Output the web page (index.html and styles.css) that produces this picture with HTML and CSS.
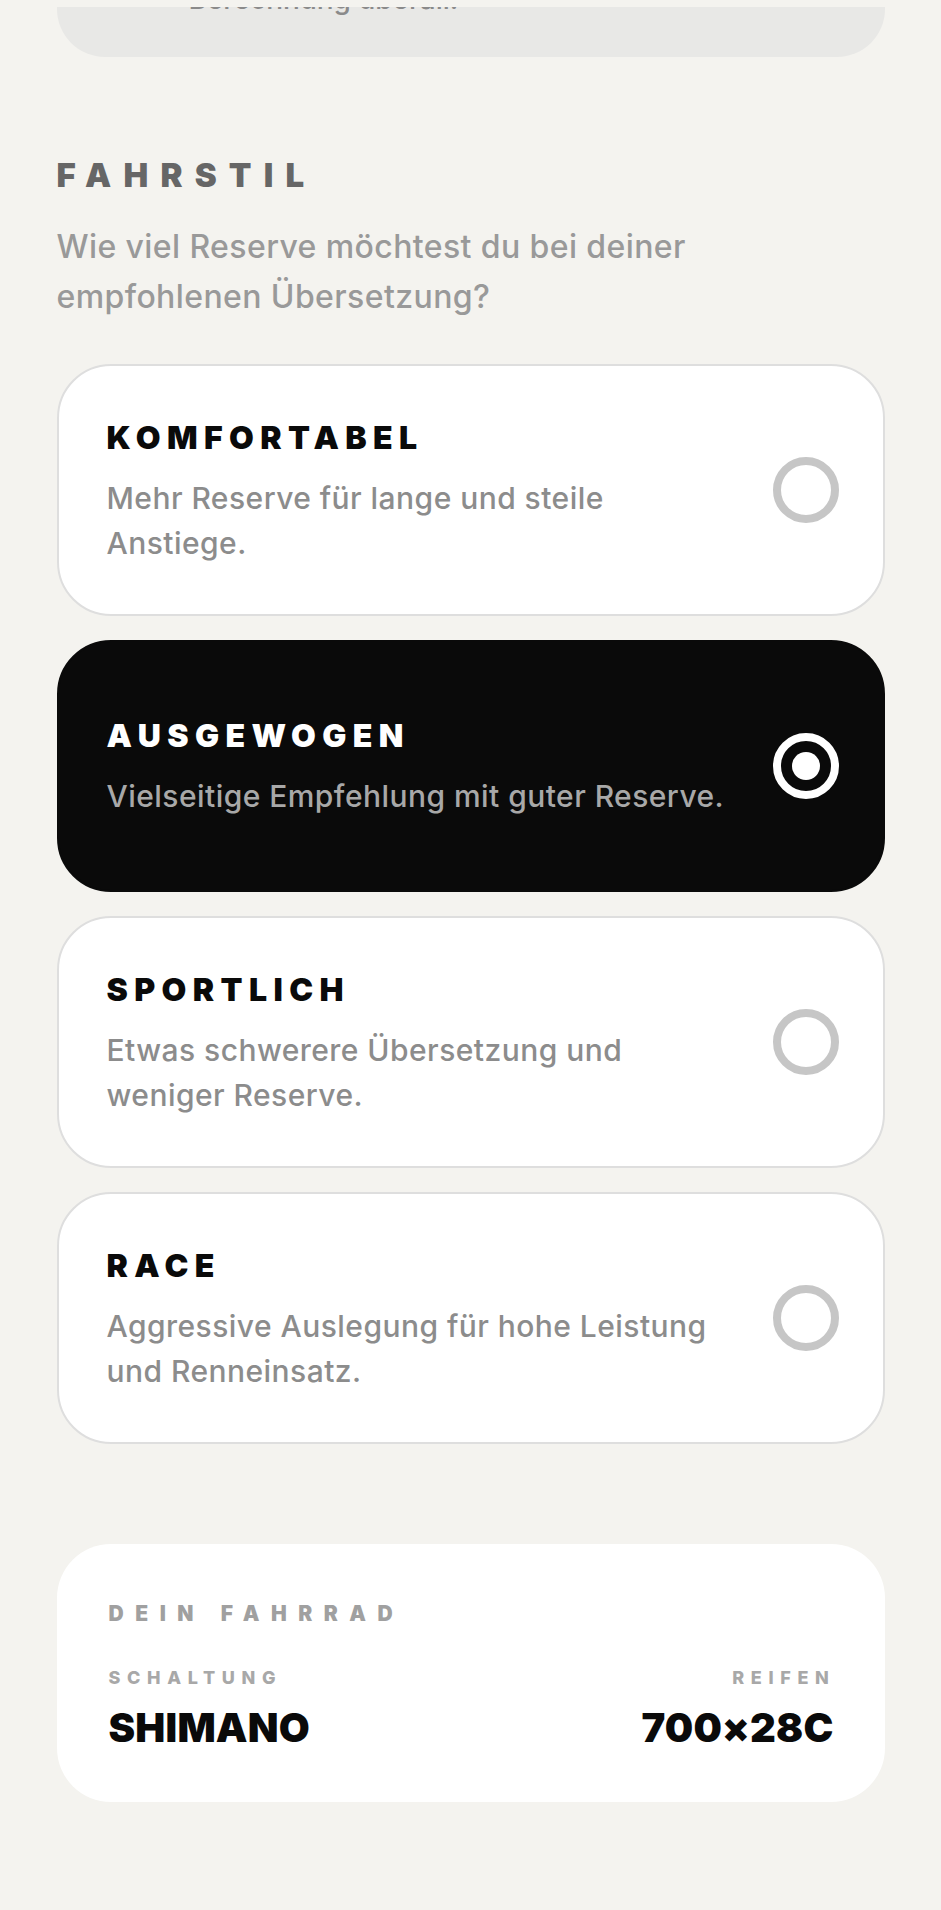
FILE: index.html
```html
<!DOCTYPE html>
<html lang="de">

<head>
    <meta charset="UTF-8">
    <meta name="viewport" content="width=device-width, initial-scale=1.0">
    <title>Fahrstil</title>
    <link rel="stylesheet" href="styles.css">
</head>

<body>
    <div class="page">
        <div class="prev_card">
            <p>Berechnung überall.</p>
        </div><!-- .prev_card end -->

        <section class="style">
            <h2>Fahrstil</h2>
            <p class="lead">Wie viel Reserve möchtest du bei deiner<br>empfohlenen Übersetzung?</p>

            <ul class="options">
                <li class="option">
                    <div class="txt">
                        <h3>Komfortabel</h3>
                        <p>Mehr Reserve für lange und steile<br>Anstiege.</p>
                    </div>
                    <span class="radio"></span>
                </li>
                <li class="option on">
                    <div class="txt">
                        <h3>Ausgewogen</h3>
                        <p>Vielseitige Empfehlung mit guter Reserve.</p>
                    </div>
                    <span class="radio"></span>
                </li>
                <li class="option">
                    <div class="txt">
                        <h3>Sportlich</h3>
                        <p>Etwas schwerere Übersetzung und<br>weniger Reserve.</p>
                    </div>
                    <span class="radio"></span>
                </li>
                <li class="option">
                    <div class="txt">
                        <h3>Race</h3>
                        <p>Aggressive Auslegung für hohe Leistung<br>und Renneinsatz.</p>
                    </div>
                    <span class="radio"></span>
                </li>
            </ul>
        </section><!-- .style end -->

        <section class="bike">
            <h4>Dein Fahrrad</h4>
            <div class="bike_row">
                <div class="item">
                    <span class="label">Schaltung</span>
                    <strong>SHIMANO</strong>
                </div>
                <div class="item right">
                    <span class="label">Reifen</span>
                    <strong>700×28C</strong>
                </div>
            </div>
        </section><!-- .bike end -->
    </div>
</body>

</html>
```

FILE: styles.css
```css
@charset "utf-8";

* {
    margin: 0;
    padding: 0;
    box-sizing: border-box;
}

li {
    list-style: none;
}

body {
    background-color: #f4f3ef;
    font-family: Inter, "Noto Sans", sans-serif;
    color: #0a0a0a;
}

.page {
    width: 828px;
    margin: 0 auto;
    padding: 7px 0 100px;
}

/* previous card, scrolled almost out of view */
.prev_card {
    height: 50px;
    overflow: hidden;
    background-color: #e8e8e6;
    border-radius: 0 0 48px 48px;
}

.prev_card p {
    margin-top: -23px;
    padding-left: 132px;
    font-size: 28px;
    line-height: 30px;
    font-weight: 500;
    color: #8a8a8a;
}

.style {
    margin-top: 98px;
}

.style h2 {
    font-size: 33px;
    line-height: 40px;
    font-weight: 900;
    letter-spacing: 0.37em;
    text-transform: uppercase;
    color: #666;
}

.style .lead {
    margin-top: 27px;
    font-size: 32px;
    line-height: 50px;
    font-weight: 500;
    letter-spacing: 0.4px;
    color: #999;
}

.options {
    margin-top: 42px;
    display: flex;
    flex-direction: column;
    gap: 24px;
}

.option {
    height: 252px;
    padding: 4px 44px 0 48px;
    display: flex;
    align-items: center;
    justify-content: space-between;
    gap: 24px;
    background-color: #fff;
    border: 2px solid #dedede;
    border-radius: 54px;
}

.option h3 {
    font-size: 32px;
    line-height: 38px;
    font-weight: 900;
    letter-spacing: 0.2em;
    text-transform: uppercase;
}

.option p {
    margin-top: 19px;
    font-size: 30px;
    line-height: 45px;
    font-weight: 500;
    letter-spacing: 0.45px;
    color: #8c8c8c;
}

.option .radio {
    flex: none;
    width: 66px;
    height: 66px;
    margin-top: -4px;
    border: 8px solid #c6c6c6;
    border-radius: 50%;
    display: flex;
    align-items: center;
    justify-content: center;
}

.option.on {
    background-color: #0a0a0a;
    border-color: #0a0a0a;
    color: #fff;
}

.option.on p {
    color: #a8a8a8;
}

.option.on .radio {
    border-color: #fff;
}

.option.on .radio::after {
    content: "";
    width: 28px;
    height: 28px;
    border-radius: 50%;
    background-color: #fff;
}

.bike {
    margin-top: 100px;
    padding: 57px 51px 51px 52px;
    background-color: #fff;
    border-radius: 54px;
}

.bike h4 {
    font-size: 21px;
    line-height: 25px;
    font-weight: 900;
    letter-spacing: 0.55em;
    text-transform: uppercase;
    color: #a0a0a0;
}

.bike_row {
    margin-top: 41px;
    display: flex;
    justify-content: space-between;
}

.bike_row .item {
    display: flex;
    flex-direction: column;
    gap: 16px;
}

.bike_row .item.right {
    align-items: flex-end;
}

.bike_row .label {
    font-size: 18px;
    line-height: 22px;
    font-weight: 800;
    letter-spacing: 0.37em;
    text-transform: uppercase;
    color: #a8a8a8;
}

.bike_row .item.right .label {
    margin-right: -2px;
}

.bike_row strong {
    font-size: 40px;
    line-height: 46px;
    font-weight: 900;
    letter-spacing: 0.2px;
}
```
